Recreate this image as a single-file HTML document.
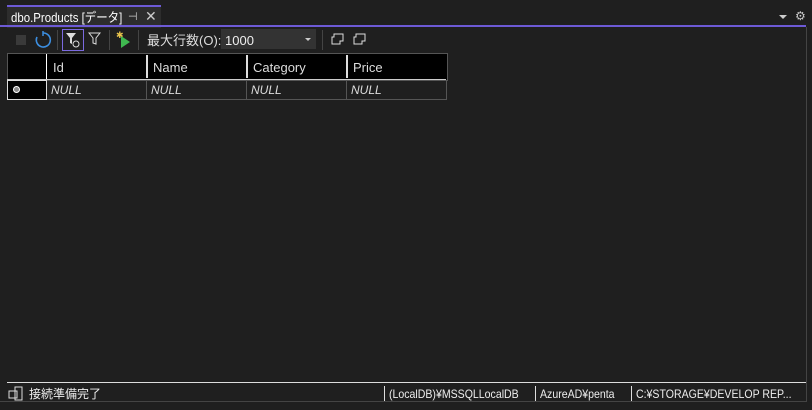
<!DOCTYPE html><html><head><style>
body{margin:0;width:812px;height:410px;background:#1f1f1f;font-family:"Liberation Sans","Noto Sans CJK JP",sans-serif;color:#ddd;position:relative;overflow:hidden;font-size:12px;line-height:15px}
.a{position:absolute;white-space:nowrap}
.n{transform-origin:0 0;transform:scaleX(0.88)}
</style></head><body>
<div class="a" style="left:7px;top:5px;width:154px;height:21px;background:#2d2d2d;border-top:2px solid #6d5ad6"></div>
<div class="a n" style="left:11px;top:10px;font-size:13px;color:#fff">dbo.Products [データ]</div>
<div class="a" style="left:128px;top:10px;font-size:11px;color:#ccc">⊣</div>
<div class="a" style="left:145px;top:9px;font-size:14px;color:#ccc">✕</div>
<div class="a" style="left:0;top:25px;width:806px;height:2px;background:#6d5ad6"></div>
<div class="a" style="left:806px;top:27px;width:1px;height:375px;background:#444"></div>
<div class="a" style="left:779px;top:15px;width:0;height:0;border-left:4px solid transparent;border-right:4px solid transparent;border-top:4px solid #ccc"></div>
<div class="a" style="left:795px;top:9px;font-size:12px;color:#ccc">⚙</div>
<div class="a" style="left:16px;top:35px;width:10px;height:10px;background:#3a3a3a"></div>
<svg class="a" style="left:34px;top:31px" width="18" height="18"><path d="M9 2 A7 7 0 1 1 3 6" stroke="#3c8ee0" stroke-width="1.6" fill="none"/><path d="M9 0 L9 5" stroke="#3c8ee0" stroke-width="1.5"/></svg>
<div class="a" style="left:57px;top:30px;width:1px;height:20px;background:#444"></div>
<div class="a" style="left:62px;top:29px;width:20px;height:20px;border:1px solid #7b6ae0"></div>
<svg class="a" style="left:65px;top:32px" width="16" height="16"><path d="M1 1 H11 L7 6 V12 L5 11 V6 Z" fill="#ddd"/><circle cx="11" cy="12" r="3" stroke="#ddd" fill="none"/></svg>
<svg class="a" style="left:88px;top:32px" width="14" height="14"><path d="M1 1 H12 L8 6 V12 L5 11 V6 Z" fill="none" stroke="#ddd"/></svg>
<div class="a" style="left:109px;top:30px;width:1px;height:20px;background:#444"></div>
<svg class="a" style="left:115px;top:29px" width="18" height="20"><path d="M6 7 L15 13 L6 19 Z" fill="#3fb950"/><text x="1" y="9" font-size="9" fill="#e8c34c">✱</text></svg>
<div class="a" style="left:138px;top:30px;width:1px;height:20px;background:#444"></div>
<div class="a" style="left:147px;top:33px;font-size:13px">最大行数(O):</div>
<div class="a" style="left:221px;top:29px;width:95px;height:20px;background:#333"></div>
<div class="a" style="left:225px;top:33px;font-size:13px;color:#eee">1000</div>
<div class="a" style="left:305px;top:38px;border-left:3px solid transparent;border-right:3px solid transparent;border-top:3px solid #ccc"></div>
<div class="a" style="left:322px;top:30px;width:1px;height:20px;background:#444"></div>
<svg class="a" style="left:331px;top:32px" width="14" height="14"><path d="M3 2 H12 V9 H9 V12 H1 V5 H3 Z M9 9 L12 9" fill="none" stroke="#ddd"/></svg>
<svg class="a" style="left:353px;top:32px" width="14" height="14"><path d="M3 2 H12 V9 H9 V12 H1 V5 H3 Z M9 9 L12 9" fill="none" stroke="#ddd"/></svg>
<div class="a" style="left:7px;top:53px;width:439px;height:26px;background:#000;border:1px solid #555"></div>
<div class="a" style="left:46px;top:54px;width:1px;height:25px;background:#fff"></div>
<div class="a" style="left:146px;top:55px;width:2px;height:23px;background:#ddd"></div>
<div class="a" style="left:246px;top:55px;width:2px;height:23px;background:#ddd"></div>
<div class="a" style="left:346px;top:55px;width:2px;height:23px;background:#ddd"></div>
<div class="a" style="left:7px;top:79px;width:439px;height:1px;background:#ccc"></div>
<div class="a" style="left:53px;top:60px;font-size:13px">Id</div>
<div class="a" style="left:153px;top:60px;font-size:13px">Name</div>
<div class="a" style="left:253px;top:60px;font-size:13px">Category</div>
<div class="a" style="left:353px;top:60px;font-size:13px">Price</div>
<div class="a" style="left:7px;top:80px;width:38px;height:18px;background:#000;border:1px solid #ddd"></div>
<div class="a" style="left:13px;top:86px;width:5px;height:5px;border-radius:50%;background:#888;border:1px solid #fff"></div>
<div class="a" style="left:47px;top:80px;width:399px;height:19px;border-bottom:1px solid #555;border-right:1px solid #555"></div>
<div class="a" style="left:146px;top:80px;width:1px;height:19px;background:#555"></div>
<div class="a" style="left:246px;top:80px;width:1px;height:19px;background:#555"></div>
<div class="a" style="left:346px;top:80px;width:1px;height:19px;background:#555"></div>
<div class="a" style="left:51px;top:83px;font-style:italic;font-size:12px">NULL</div>
<div class="a" style="left:151px;top:83px;font-style:italic;font-size:12px">NULL</div>
<div class="a" style="left:251px;top:83px;font-style:italic;font-size:12px">NULL</div>
<div class="a" style="left:351px;top:83px;font-style:italic;font-size:12px">NULL</div>
<div class="a" style="left:7px;top:382px;width:799px;height:1px;background:#ddd"></div>
<div class="a" style="left:0;top:401px;width:807px;height:1px;background:#444"></div>
<svg class="a" style="left:8px;top:386px" width="18" height="15"><rect x="1" y="5" width="8" height="7" fill="none" stroke="#ddd"/><rect x="7" y="1" width="7" height="13" fill="none" stroke="#ddd"/></svg>
<div class="a" style="left:29px;top:387px;font-size:12px;color:#eee">接続準備完了</div>
<div class="a" style="left:384px;top:386px;width:1px;height:15px;background:#ddd"></div>
<div class="a n" style="left:389px;top:387px;color:#eee">(LocalDB)¥MSSQLLocalDB</div>
<div class="a" style="left:535px;top:386px;width:1px;height:15px;background:#ddd"></div>
<div class="a n" style="left:540px;top:387px;color:#eee">AzureAD¥penta</div>
<div class="a" style="left:631px;top:386px;width:1px;height:15px;background:#ddd"></div>
<div class="a n" style="left:636px;top:387px;color:#eee">C:¥STORAGE¥DEVELOP REP...</div>
</body></html>
